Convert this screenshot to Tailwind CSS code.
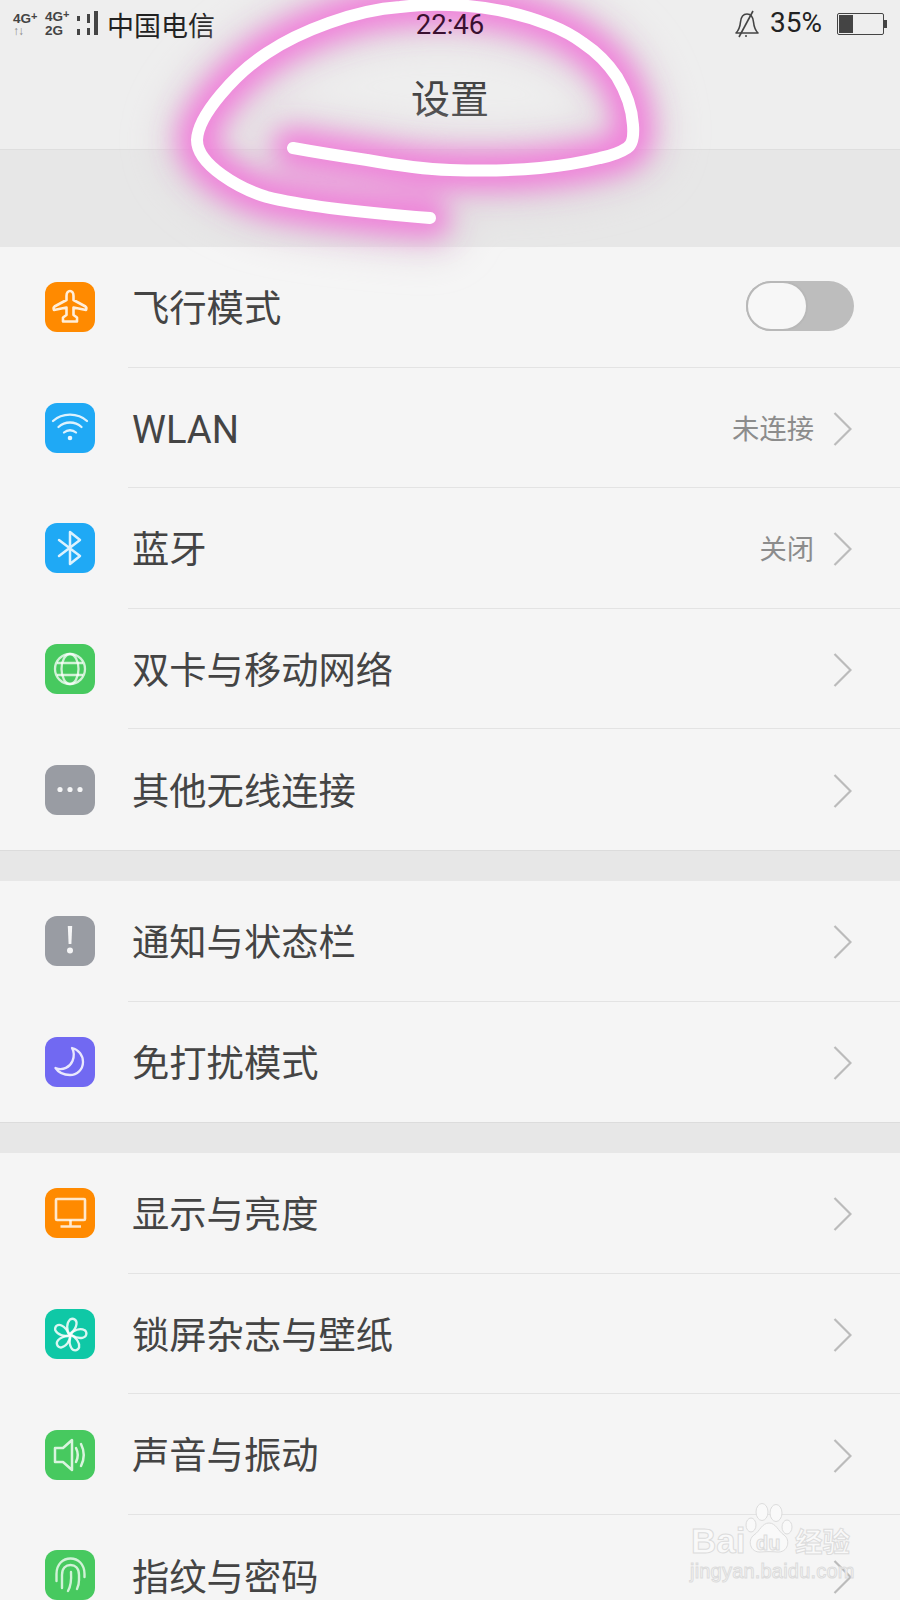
<!DOCTYPE html>
<html lang="zh">
<head>
<meta charset="utf-8">
<script src="https://cdn.jsdelivr.net/npm/@tailwindcss/browser@4"></script>
<title>设置</title>
</head>
<body>
<div class="relative w-[900px] h-[1600px] overflow-hidden bg-[#e7e7e7] font-['Roboto','Noto_Sans_CJK_SC',sans-serif] text-[#444]">

  <header class="h-[150px] bg-[#eeeeee] border-b border-[#dedede]">
    <div class="h-[48px] flex items-center pl-[13px] pr-[13px] text-[#222]">
      <div class="w-[32px] flex flex-col items-start font-['Liberation_Sans',sans-serif] font-bold text-[13.5px] leading-[13px] text-[#444]">
        <span>4G<sup class="text-[11px] top-0 align-[3px]">+</sup></span>
        <span class="text-[#888] text-[12px] leading-[12px] tracking-[-1px]">↑↓</span>
      </div>
      <div class="w-[32px] flex flex-col font-['Liberation_Sans',sans-serif] font-bold text-[13.5px] leading-[14px] text-[#444]">
        <span>4G<sup class="text-[11px] top-0 align-[3px]">+</sup></span>
        <span>2G</span>
      </div>
      <svg class="shrink-0 -ml-[1px]" width="24" height="26" viewBox="0 0 24 26" fill="#444">
        <rect x="1" y="5" width="3" height="5"/><rect x="1" y="18" width="3" height="6"/>
        <rect x="11" y="3" width="3" height="9"/><rect x="11" y="17" width="3" height="7"/>
        <rect x="18" y="0" width="4" height="24"/>
      </svg>
      <span class="ml-[7px] text-[27px] leading-none font-['Noto_Sans_CJK_SC',sans-serif]">中国电信</span>
      <span class="absolute z-10 left-0 top-[7px] w-[900px] text-center text-[27.5px] leading-[36px] text-[#3a1030]">22:46</span>
      <div class="ml-auto flex items-center">
        <svg width="26" height="28" viewBox="0 0 26 28" fill="none" stroke="#444" stroke-width="1.600" stroke-linejoin="round">
          <path d="M2 23 C5 20 6 17 6.500 12 C7 7 9.500 4 13 4 C16.500 4 19 7 19.500 12 C20 17 21 20 24 23 Z"/>
          <path d="M19 1 L5 27"/>
          <circle cx="12" cy="26" r="1" fill="#444" stroke="none"/>
        </svg>
        <span class="ml-[10px] text-[28px] leading-none text-[#222] -mt-[2px]">35%</span>
        <div class="ml-[15px] flex items-center">
          <div class="w-[47px] h-[22px] rounded-[2px] border-[1.5px] border-[#444] p-[1px] flex">
            <div class="w-[14px] bg-[#444]"></div>
          </div>
          <div class="w-[3px] h-[8px] bg-[#444]"></div>
        </div>
      </div>
    </div>
    <h1 class="mt-[23px] text-center text-[39px] leading-[50px] font-normal text-[#444] font-['Noto_Sans_CJK_SC',sans-serif]">设置</h1>
  </header>

  <main class="pt-[97px]">
    <section class="bg-[#f5f5f5] border-b border-[#dcdcdc]">
      <div class="h-[120.6px] flex items-center pl-[45px]">
        <svg class="shrink-0" width="50" height="50" viewBox="0 0 50 50"><rect width="50" height="50" rx="12" fill="#ff8a00"/><path d="M25 9 C27 9 28.500 11 28.500 14 V18 L40.500 24.500 Q42 25.500 41 28 L28.500 25.500 V33 L32 35.500 V39.500 H18 V35.500 L21.500 33 V25.500 L9 28 Q8 25.500 9.500 24.500 L21.500 18 V14 C21.500 11 23 9 25 9 Z" fill="none" stroke="#fff" stroke-opacity=".85" stroke-width="2.600" stroke-linejoin="round"/></svg>
        <div class="ml-[33px] flex-1 h-full flex items-center border-b border-[#e3e3e3] pl-[4px] pr-[46px]">
          <span class="pt-[6px] text-[37.3px] leading-none">飞行模式</span>
          <div class="ml-auto mb-[2px] relative w-[108px] h-[50px] rounded-full bg-[#bdbdbd]">
            <div class="w-[62px] h-[50px] rounded-full bg-[#f7f7f7] border-2 border-[#b8b8b8]"></div>
          </div>
        </div>
      </div>
      <div class="h-[120.6px] flex items-center pl-[45px]">
        <svg class="shrink-0" width="50" height="50" viewBox="0 0 50 50"><rect width="50" height="50" rx="12" fill="#1fa9f5"/><g fill="none" stroke="#fff" stroke-opacity=".85" stroke-width="2.300" stroke-linecap="round"><path d="M8 18 C17 9.500 33 9.500 42 18"/><path d="M13.500 24 C20 18 30 18 36.500 24"/><path d="M19 29.500 C22.500 26.500 27.500 26.500 31 29.500"/></g><circle cx="25" cy="35" r="2.300" fill="#fff" fill-opacity=".9"/></svg>
        <div class="ml-[33px] flex-1 h-full flex items-center border-b border-[#e3e3e3] pl-[4px] pr-[48px]">
          <span class="pt-[6px] text-[38.2px] leading-none">WLAN</span>
          <span class="ml-auto pt-[6px] text-[27.3px] leading-none text-[#8c8c8c]">未连接</span>
          <svg class="ml-[19px] mt-[3px] shrink-0" width="19" height="36" viewBox="0 0 19 36" fill="none" stroke="#bbb" stroke-width="2.200"><path d="M1.500 2 L17.500 18 L1.500 34"/></svg>
        </div>
      </div>
      <div class="h-[120.6px] flex items-center pl-[45px]">
        <svg class="shrink-0" width="50" height="50" viewBox="0 0 50 50"><rect width="50" height="50" rx="12" fill="#1fa9f5"/><path d="M14 17 L35 33 L25 41 V9 L35 17 L14 33" fill="none" stroke="#fff" stroke-opacity=".85" stroke-width="2.500" stroke-linejoin="round" stroke-linecap="round"/></svg>
        <div class="ml-[33px] flex-1 h-full flex items-center border-b border-[#e3e3e3] pl-[4px] pr-[48px]">
          <span class="pt-[6px] text-[37.3px] leading-none">蓝牙</span>
          <span class="ml-auto pt-[6px] text-[27.3px] leading-none text-[#8c8c8c]">关闭</span>
          <svg class="ml-[19px] mt-[3px] shrink-0" width="19" height="36" viewBox="0 0 19 36" fill="none" stroke="#bbb" stroke-width="2.200"><path d="M1.500 2 L17.500 18 L1.500 34"/></svg>
        </div>
      </div>
      <div class="h-[120.6px] flex items-center pl-[45px]">
        <svg class="shrink-0" width="50" height="50" viewBox="0 0 50 50"><rect width="50" height="50" rx="12" fill="#47c95f"/><g fill="none" stroke="#fff" stroke-opacity=".75" stroke-width="2.300"><circle cx="25" cy="25" r="15"/><ellipse cx="25" cy="25" rx="8.500" ry="15"/><path d="M12 19 H38 M12 31 H38"/></g></svg>
        <div class="ml-[33px] flex-1 h-full flex items-center border-b border-[#e3e3e3] pl-[4px] pr-[48px]">
          <span class="pt-[6px] text-[37.3px] leading-none">双卡与移动网络</span>
          <svg class="ml-auto mt-[3px] shrink-0" width="19" height="36" viewBox="0 0 19 36" fill="none" stroke="#bbb" stroke-width="2.200"><path d="M1.500 2 L17.500 18 L1.500 34"/></svg>
        </div>
      </div>
      <div class="h-[120.6px] flex items-center pl-[45px]">
        <svg class="shrink-0" width="50" height="50" viewBox="0 0 50 50"><rect width="50" height="50" rx="12" fill="#999ca3"/><g fill="#fff" fill-opacity=".9"><circle cx="15" cy="24.500" r="2.600"/><circle cx="25" cy="24.500" r="2.600"/><circle cx="35" cy="24.500" r="2.600"/></g></svg>
        <div class="ml-[33px] flex-1 h-full flex items-center pl-[4px] pr-[48px]">
          <span class="pt-[6px] text-[37.3px] leading-none">其他无线连接</span>
          <svg class="ml-auto mt-[3px] shrink-0" width="19" height="36" viewBox="0 0 19 36" fill="none" stroke="#bbb" stroke-width="2.200"><path d="M1.500 2 L17.500 18 L1.500 34"/></svg>
        </div>
      </div>
    </section>

    <section class="mt-[30px] bg-[#f5f5f5] border-b border-[#dcdcdc]">
      <div class="h-[120.6px] flex items-center pl-[45px]">
        <svg class="shrink-0" width="50" height="50" viewBox="0 0 50 50"><rect width="50" height="50" rx="12" fill="#999ca3"/><path d="M22.800 10 H27.200 L26.400 28 H23.600 Z" fill="#fff" fill-opacity=".9"/><circle cx="25" cy="34.500" r="3" fill="#fff" fill-opacity=".9"/></svg>
        <div class="ml-[33px] flex-1 h-full flex items-center border-b border-[#e3e3e3] pl-[4px] pr-[48px]">
          <span class="pt-[6px] text-[37.3px] leading-none">通知与状态栏</span>
          <svg class="ml-auto mt-[3px] shrink-0" width="19" height="36" viewBox="0 0 19 36" fill="none" stroke="#bbb" stroke-width="2.200"><path d="M1.500 2 L17.500 18 L1.500 34"/></svg>
        </div>
      </div>
      <div class="h-[120.6px] flex items-center pl-[45px]">
        <svg class="shrink-0" width="50" height="50" viewBox="0 0 50 50"><rect width="50" height="50" rx="12" fill="#7169f2"/><path d="M27 11 C33.500 12.500 38 18 38 25 C38 32.500 32 38 25 38 C19 38 13.500 35.500 10.500 31 C18 34 25 30 27.500 24 C29.500 19 29 14.500 27 11 Z" fill="none" stroke="#fff" stroke-opacity=".85" stroke-width="2.300" stroke-linejoin="round"/></svg>
        <div class="ml-[33px] flex-1 h-full flex items-center pl-[4px] pr-[48px]">
          <span class="pt-[6px] text-[37.3px] leading-none">免打扰模式</span>
          <svg class="ml-auto mt-[3px] shrink-0" width="19" height="36" viewBox="0 0 19 36" fill="none" stroke="#bbb" stroke-width="2.200"><path d="M1.500 2 L17.500 18 L1.500 34"/></svg>
        </div>
      </div>
    </section>

    <section class="mt-[30px] bg-[#f5f5f5]">
      <div class="h-[120.6px] flex items-center pl-[45px]">
        <svg class="shrink-0" width="50" height="50" viewBox="0 0 50 50"><rect width="50" height="50" rx="12" fill="#ff8a00"/><g fill="none" stroke="#fff" stroke-opacity=".8" stroke-width="2.600"><rect x="11" y="11" width="29" height="21" rx="1"/><path d="M25.500 32 V38 M15.500 38.500 H36"/></g></svg>
        <div class="ml-[33px] flex-1 h-full flex items-center border-b border-[#e3e3e3] pl-[4px] pr-[48px]">
          <span class="pt-[6px] text-[37.3px] leading-none">显示与亮度</span>
          <svg class="ml-auto mt-[3px] shrink-0" width="19" height="36" viewBox="0 0 19 36" fill="none" stroke="#bbb" stroke-width="2.200"><path d="M1.500 2 L17.500 18 L1.500 34"/></svg>
        </div>
      </div>
      <div class="h-[120.6px] flex items-center pl-[45px]">
        <svg class="shrink-0" width="50" height="50" viewBox="0 0 50 50"><rect width="50" height="50" rx="12" fill="#0fc8a6"/><g fill="none" stroke="#fff" stroke-opacity=".85" stroke-width="2.300" stroke-linecap="round" stroke-linejoin="round"><path d="M25 26 C21 21 21.500 14 25 10.500 C28.500 8.500 32 11 31.500 15 C31 19 28 22.500 26 24"/><path d="M25 26 C21 21 21.500 14 25 10.500 C28.500 8.500 32 11 31.500 15 C31 19 28 22.500 26 24" transform="rotate(72 25 26)"/><path d="M25 26 C21 21 21.500 14 25 10.500 C28.500 8.500 32 11 31.500 15 C31 19 28 22.500 26 24" transform="rotate(144 25 26)"/><path d="M25 26 C21 21 21.500 14 25 10.500 C28.500 8.500 32 11 31.500 15 C31 19 28 22.500 26 24" transform="rotate(216 25 26)"/><path d="M25 26 C21 21 21.500 14 25 10.500 C28.500 8.500 32 11 31.500 15 C31 19 28 22.500 26 24" transform="rotate(288 25 26)"/></g></svg>
        <div class="ml-[33px] flex-1 h-full flex items-center border-b border-[#e3e3e3] pl-[4px] pr-[48px]">
          <span class="pt-[6px] text-[37.3px] leading-none">锁屏杂志与壁纸</span>
          <svg class="ml-auto mt-[3px] shrink-0" width="19" height="36" viewBox="0 0 19 36" fill="none" stroke="#bbb" stroke-width="2.200"><path d="M1.500 2 L17.500 18 L1.500 34"/></svg>
        </div>
      </div>
      <div class="h-[120.6px] flex items-center pl-[45px]">
        <svg class="shrink-0" width="50" height="50" viewBox="0 0 50 50"><rect width="50" height="50" rx="12" fill="#47c95f"/><g fill="none" stroke="#fff" stroke-opacity=".8" stroke-width="2.500" stroke-linejoin="round" stroke-linecap="round"><path d="M10 18 H18 L27 10 V40 L18 32 H10 Z"/><path d="M31 18 Q34.500 25 31 32"/><path d="M36 14 Q41.500 25 36 36"/></g></svg>
        <div class="ml-[33px] flex-1 h-full flex items-center border-b border-[#e3e3e3] pl-[4px] pr-[48px]">
          <span class="pt-[6px] text-[37.3px] leading-none">声音与振动</span>
          <svg class="ml-auto mt-[3px] shrink-0" width="19" height="36" viewBox="0 0 19 36" fill="none" stroke="#bbb" stroke-width="2.200"><path d="M1.500 2 L17.500 18 L1.500 34"/></svg>
        </div>
      </div>
      <div class="h-[120.6px] flex items-center pl-[45px]">
        <svg class="shrink-0" width="50" height="50" viewBox="0 0 50 50"><rect width="50" height="50" rx="12" fill="#47c95f"/><g fill="none" stroke="#fff" stroke-opacity=".75" stroke-width="2.400" stroke-linecap="round"><path d="M11.500 31 V24 C11.500 14 18 8.500 25.500 8.500 C33 8.500 39.500 14 39.500 24 V27"/><path d="M17 38 V25 C17 18 21 15 25.500 15 C30 15 34 18 34 25 V30 C34 33 33.500 36 32 39"/><path d="M23 41 C26 36 26.500 30 26 22"/></g></svg>
        <div class="ml-[33px] flex-1 h-full flex items-center pl-[4px] pr-[48px]">
          <span class="pt-[6px] text-[37.3px] leading-none">指纹与密码</span>
          <svg class="ml-auto mt-[3px] shrink-0" width="19" height="36" viewBox="0 0 19 36" fill="none" stroke="#bbb" stroke-width="2.200"><path d="M1.500 2 L17.500 18 L1.500 34"/></svg>
        </div>
      </div>
    </section>
  </main>

  <!-- hand-drawn highlight scribble over the page -->
  <svg class="absolute left-0 top-0 pointer-events-none" width="900" height="300" viewBox="0 0 900 300" fill="none" stroke-linecap="round" stroke-linejoin="round">
    <defs>
      <filter id="g1" x="-20%" y="-60%" width="140%" height="220%"><feGaussianBlur stdDeviation="16"/></filter>
      <filter id="g2" x="-20%" y="-60%" width="140%" height="220%"><feGaussianBlur stdDeviation="13"/></filter>
    </defs>
    <path d="M430 218 C380 214 310 208 267 197 C240 189 197 165 197 140 C198 115 235 74 267 53 C300 31 355 10 400 7 C417 5 433 4 450 5 C485 6 520 13 550 25 C565 31 575 37 583 43 C598 53 609 65 617 77 C626 92 632 108 633 125 C634 138 632 145 627 148 C618 154 610 156 600 158 C580 163 560 166 540 168 C510 171 480 171 450 170 C420 169 395 165 367 160 C340 156 315 152 293 148" stroke="#dcd0d8" stroke-opacity=".55" stroke-width="84" filter="url(#g1)"/>
    <path d="M430 218 C380 214 310 208 267 197 C240 189 197 165 197 140 C198 115 235 74 267 53 C300 31 355 10 400 7 C417 5 433 4 450 5 C485 6 520 13 550 25 C565 31 575 37 583 43 C598 53 609 65 617 77 C626 92 632 108 633 125 C634 138 632 145 627 148 C618 154 610 156 600 158 C580 163 560 166 540 168 C510 171 480 171 450 170 C420 169 395 165 367 160 C340 156 315 152 293 148" stroke="#f26ad8" stroke-opacity=".8" stroke-width="40" filter="url(#g2)"/>
    <path d="M430 218 C380 214 310 208 267 197 C240 189 197 165 197 140 C198 115 235 74 267 53 C300 31 355 10 400 7 C417 5 433 4 450 5 C485 6 520 13 550 25 C565 31 575 37 583 43 C598 53 609 65 617 77 C626 92 632 108 633 125 C634 138 632 145 627 148 C618 154 610 156 600 158 C580 163 560 166 540 168 C510 171 480 171 450 170 C420 169 395 165 367 160 C340 156 315 152 293 148" stroke="#fff" stroke-width="12"/>
  </svg>

  <!-- watermark -->
  <div class="absolute left-[690px] top-[1503px] w-[165px] h-[85px] pointer-events-none text-[#f9f9f9]">
    <span class="absolute left-[1px] top-[20px] text-[35px] leading-[36px] font-bold font-['Liberation_Sans',sans-serif] [-webkit-text-stroke:1px_#dcdcdc]">Bai</span>
    <svg class="absolute left-[55px] top-0" width="48" height="52" viewBox="0 0 48 52" fill="#f9f9f9" stroke="#dcdcdc" stroke-width="1">
      <ellipse cx="6" cy="22" rx="5" ry="7"/><ellipse cx="17" cy="9" rx="6" ry="8.500"/><ellipse cx="31" cy="10" rx="6" ry="8.500"/><ellipse cx="42" cy="24" rx="5" ry="7"/>
      <path d="M24 20 C31 20 33 28 39 32 C46 37 43 50 32 49 C27 48.500 21 48.500 16 49 C5 50 2 37 9 32 C15 28 17 20 24 20 Z"/>
    </svg>
    <span class="absolute left-[66px] top-[28px] text-[20px] leading-[24px] font-bold font-['Liberation_Sans',sans-serif] text-[#f5f5f5] [-webkit-text-stroke:1px_#dcdcdc]">du</span>
    <span class="absolute left-[105px] top-[22px] text-[27.500px] leading-[30px] font-bold font-['Noto_Sans_CJK_SC',sans-serif] [-webkit-text-stroke:1px_#dcdcdc]">经验</span>
    <span class="absolute left-0 top-[55px] text-[20px] leading-[26px] tracking-[0.2px] whitespace-nowrap font-['Liberation_Sans',sans-serif] [-webkit-text-stroke:1px_#dcdcdc]">jingyan.baidu.com</span>
  </div>
</div>
</body>
</html>
